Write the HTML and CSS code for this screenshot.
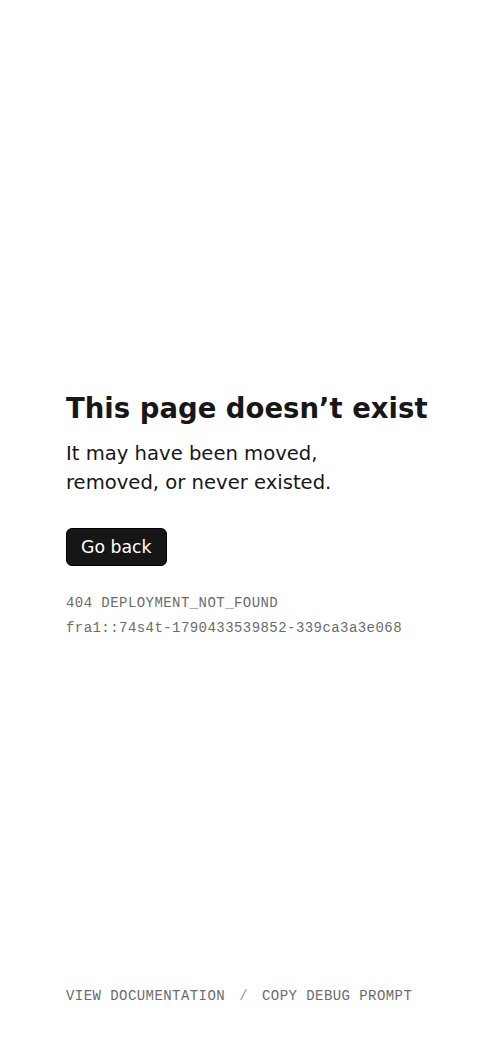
FILE: index.html
```html
<!DOCTYPE html>
<html lang="en">
<head>
<meta charset="utf-8">
<meta name="viewport" content="width=device-width, initial-scale=1">
<title>404: This page doesn’t exist</title>
<link rel="stylesheet" href="styles.css">
</head>
<body>
<main class="page">
  <section class="content">
    <h1 class="title">This page doesn’t exist</h1>
    <p class="lead">It may have been moved,<br>removed, or never existed.</p>
    <button class="btn" type="button">Go back</button>
    <div class="code">
      <p class="code-line">404 DEPLOYMENT_NOT_FOUND</p>
      <p class="code-line">fra1::74s4t-1790433539852-339ca3a3e068</p>
    </div>
  </section>
  <footer class="footer">
    <a class="footer-link" href="#">View documentation</a>
    <span class="sep">/</span>
    <a class="footer-link" href="#">Copy debug prompt</a>
  </footer>
</main>
</body>
</html>
```
FILE: styles.css
```css
* { box-sizing: border-box; }
html, body { margin: 0; padding: 0; background: #fff; }
body { font-family: "DejaVu Sans", sans-serif; color: #171717; }
.page {
  min-height: 1038px;
  display: flex;
  flex-direction: column;
  padding: 0 40px 0 66px;
}
.content {
  flex: 1;
  display: flex;
  flex-direction: column;
  justify-content: center;
  align-items: flex-start;
  padding-top: 43px;
}
.title {
  margin: 0;
  font-size: 27.5px;
  font-weight: 700;
  line-height: 36px;
  color: #171717;
  white-space: nowrap;
}
.lead {
  margin: 13px 0 0;
  font-size: 19.6px;
  line-height: 29px;
  color: #171717;
}
.btn {
  margin-top: 31px;
  height: 38px;
  padding: 0 14px;
  border: 1px solid #000;
  border-radius: 6px;
  background: #161616;
  color: #fff;
  font-family: "DejaVu Sans", sans-serif;
  font-size: 17.3px;
}
.code { margin-top: 25px; }
.code-line {
  margin: 0;
  font-family: "Courier New", Courier, "Liberation Mono", monospace;
  font-size: 14px;
  letter-spacing: 0.44px;
  line-height: 25px;
  color: #6b6b6b;
}
.footer {
  display: flex;
  align-items: center;
  gap: 14px;
  padding-bottom: 34px;
  font-family: "Courier New", Courier, "Liberation Mono", monospace;
  font-size: 14px;
  letter-spacing: 0.44px;
  text-transform: uppercase;
  color: #6b6b6b;
}
.footer-link { color: #6b6b6b; text-decoration: none; }
.sep { color: #999; }
```
